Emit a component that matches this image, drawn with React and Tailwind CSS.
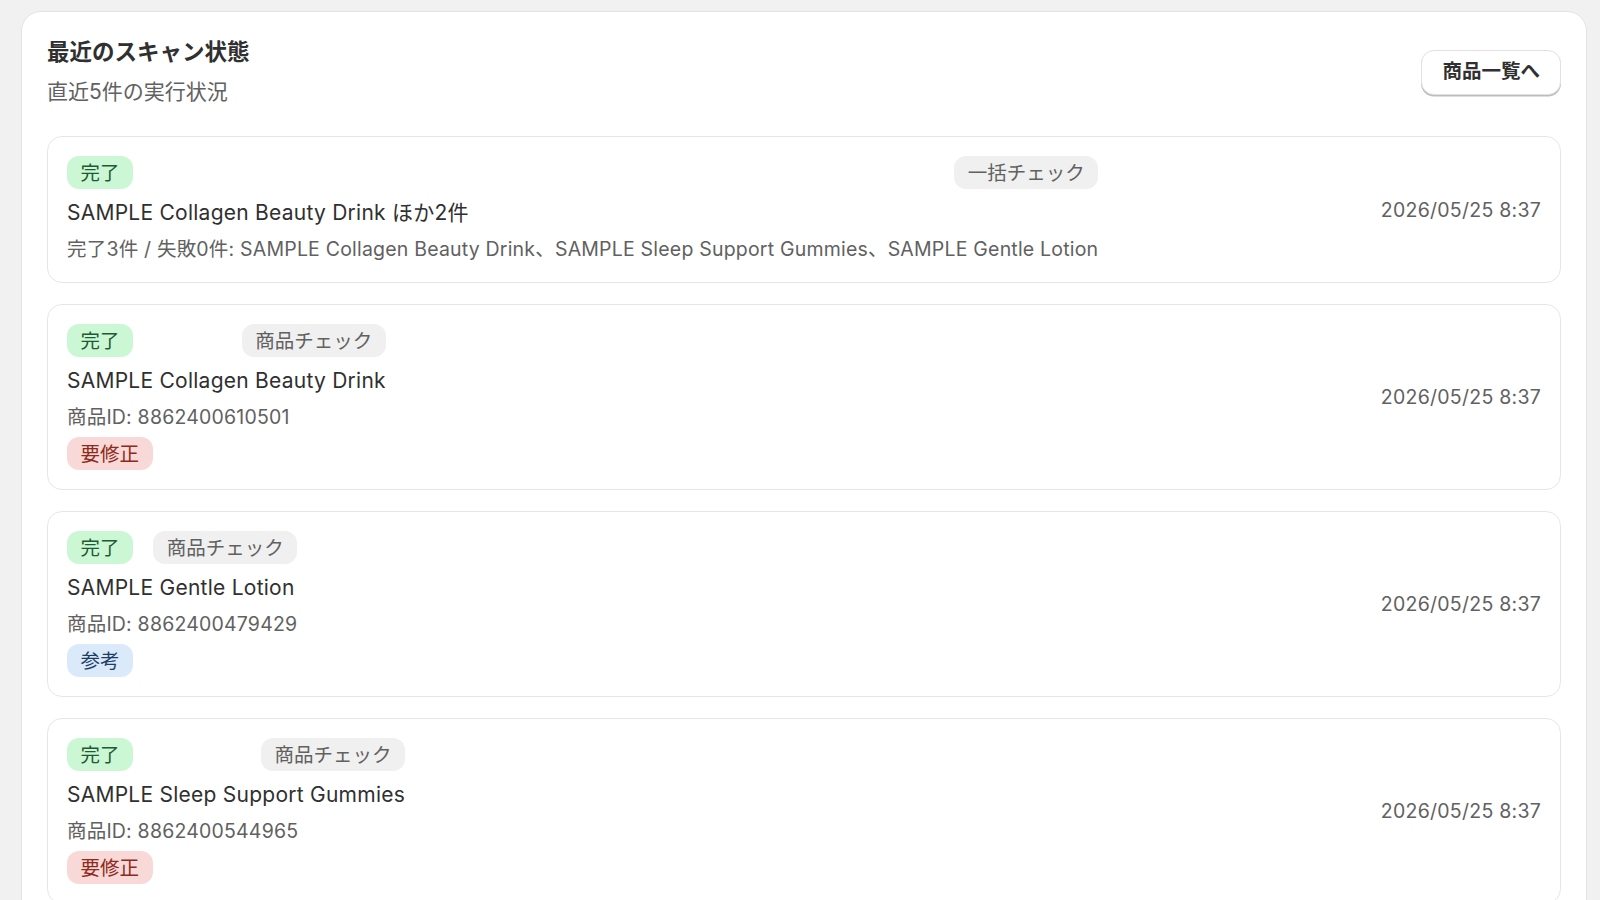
import React from "react";

// 直近のスキャン結果(サンプルデータ)
const scans = [
  {
    kind: "一括チェック",
    title: "SAMPLE Collagen Beauty Drink ほか2件",
    detail:
      "完了3件 / 失敗0件: SAMPLE Collagen Beauty Drink、SAMPLE Sleep Support Gummies、SAMPLE Gentle Lotion",
    result: null,
    date: "2026/05/25 8:37",
  },
  {
    kind: "商品チェック",
    title: "SAMPLE Collagen Beauty Drink",
    detail: "商品ID: 8862400610501",
    result: "critical",
    date: "2026/05/25 8:37",
  },
  {
    kind: "商品チェック",
    title: "SAMPLE Gentle Lotion",
    detail: "商品ID: 8862400479429",
    result: "info",
    date: "2026/05/25 8:37",
  },
  {
    kind: "商品チェック",
    title: "SAMPLE Sleep Support Gummies",
    detail: "商品ID: 8862400544965",
    result: "critical",
    date: "2026/05/25 8:37",
  },
];

// バッジの色
const badgeTone = {
  success: "bg-[#cbf7d5] text-[#1f5a34]",
  neutral: "bg-[#f0f0f0] text-[#616161]",
  critical: "bg-[#f9d9d7] text-[#8e2a1c]",
  info: "bg-[#dbeafb] text-[#1d3f66]",
};

function Badge({ tone, children }) {
  return (
    <span
      className={`inline-flex h-[33px] items-center rounded-[12px] px-[13.5px] text-[19.5px] leading-[30px] ${badgeTone[tone]}`}
    >
      {children}
    </span>
  );
}

function ScanRow({ scan }) {
  return (
    <div className="flex items-center justify-between rounded-[15px] border border-[#e6e6e6] bg-white p-[19px]">
      <div className="flex flex-col">
        <div className="flex justify-between gap-[20px]">
          <Badge tone="success">完了</Badge>
          <Badge tone="neutral">{scan.kind}</Badge>
        </div>
        <div className="mt-[9px] text-[21px] leading-[30px] tracking-[0.25px] text-[#303030]">{scan.title}</div>
        <div className="mt-[7px] text-[19.5px] leading-[28px] tracking-[0.2px] text-[#616161]">{scan.detail}</div>
        {scan.result && (
          <div className="mt-[6px] flex">
            <Badge tone={scan.result}>{scan.result === "critical" ? "要修正" : "参考"}</Badge>
          </div>
        )}
      </div>
      <div className="text-[19.5px] leading-[30px] tracking-[0.25px] text-[#616161]">{scan.date}</div>
    </div>
  );
}

export default function App() {
  return (
    <div
      className="h-screen overflow-hidden bg-[#f1f1f1] pl-[21px] pr-[13px] pt-[11px]"
      style={{ fontFamily: 'Inter, "Noto Sans CJK JP", sans-serif' }}
    >
      <div className="rounded-[20px] border border-[#e3e3e3] bg-white p-[25px]">
        {/* ヘッダー */}
        <div className="flex items-center justify-between">
          <div>
            <h2 className="text-[22.5px] font-bold leading-[30px] text-[#303030]">最近のスキャン状態</h2>
            <p className="mt-[10px] text-[21px] leading-[30px] text-[#616161]">直近5件の実行状況</p>
          </div>
          <button className="h-[45px] rounded-[13px] border border-[#e1e1e1] bg-white px-[20px] text-[19.5px] font-bold text-[#303030] shadow-[0_1.5px_0_0_#bdbdbd]">
            商品一覧へ
          </button>
        </div>

        {/* スキャン一覧 */}
        <div className="mt-[29px] flex flex-col gap-[21px]">
          {scans.map((scan, i) => (
            <ScanRow key={i} scan={scan} />
          ))}
        </div>
      </div>
    </div>
  );
}
